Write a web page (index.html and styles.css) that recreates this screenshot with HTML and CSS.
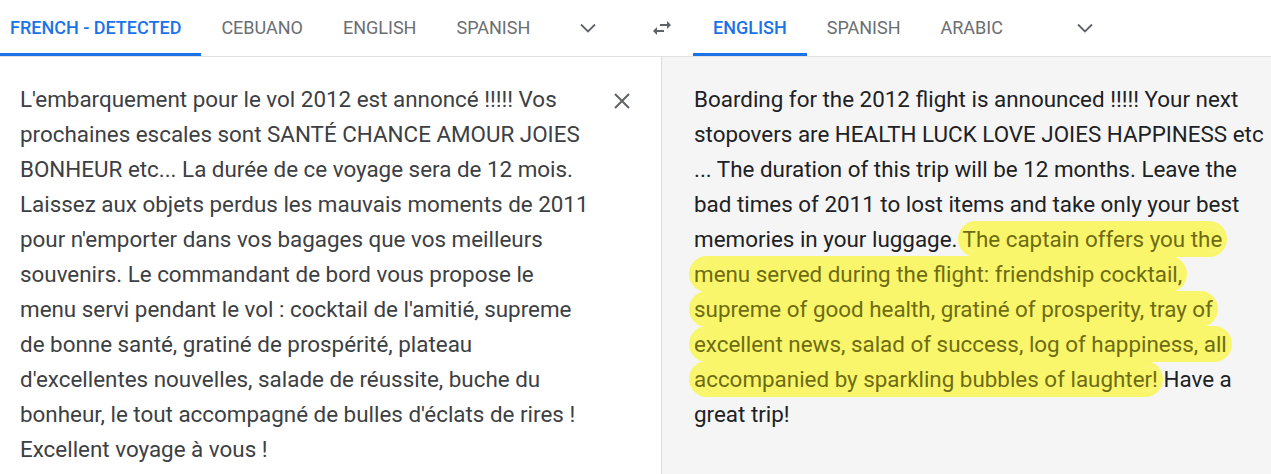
FILE: index.html
```html
<!DOCTYPE html>
<html lang="fr">
<head>
  <meta charset="UTF-8">
  <title>Translate</title>
  <link rel="stylesheet" href="styles.css">
</head>
<body>
  <div class="lang-header">
    <div class="lang-bar source-bar">
      <div class="tab active">French - detected</div>
      <div class="tab">Cebuano</div>
      <div class="tab">English</div>
      <div class="tab">Spanish</div>
      <div class="chevron">
        <svg width="24" height="24" viewBox="0 0 24 24"><path d="M5 8.5l7 7 7-7" fill="none" stroke="#5f6368" stroke-width="1.8"/></svg>
      </div>
    </div>
    <div class="swap">
      <svg width="24" height="24" viewBox="0 0 24 24"><path d="M6.99 11L3 15l3.99 4v-3H14v-2H6.99v-3zM21 9l-3.99-4v3H10v2h7.01v3L21 9z" fill="#5f6368"/></svg>
    </div>
    <div class="lang-bar target-bar">
      <div class="tab active">English</div>
      <div class="tab">Spanish</div>
      <div class="tab">Arabic</div>
      <div class="chevron target-chevron">
        <svg width="24" height="24" viewBox="0 0 24 24"><path d="M5 8.5l7 7 7-7" fill="none" stroke="#5f6368" stroke-width="1.8"/></svg>
      </div>
    </div>
  </div>

  <div class="panels">
    <div class="panel source">
      <div class="source-text">L'embarquement pour le vol 2012 est annoncé !!!!! Vos prochaines escales sont SANTÉ CHANCE AMOUR JOIES BONHEUR etc... La durée de ce voyage sera de 12 mois. Laissez aux objets perdus les mauvais moments de 2011 pour n'emporter dans vos bagages que vos meilleurs souvenirs. Le commandant de bord vous propose le menu servi pendant le vol : cocktail de l'amitié, supreme de bonne santé, gratiné de prospérité, plateau d'excellentes nouvelles, salade de réussite, buche du bonheur, le tout accompagné de bulles d'éclats de rires ! Excellent voyage à vous !</div>
      <div class="clear-btn">
        <svg width="24" height="24" viewBox="0 0 24 24"><path d="M5 5l14 14M19 5L5 19" fill="none" stroke="#5f6368" stroke-width="2"/></svg>
      </div>
    </div>
    <div class="panel target">
      <div class="target-text" lang="en">Boarding for the 2012 flight is announced !!!!! Your next stopovers are HEALTH LUCK LOVE JOIES HAPPINESS etc ... The duration of this trip will be 12 months. Leave the bad times of 2011 to lost items and take only your best memories in your luggage. <span class="marked">The captain offers you the menu served during the flight: friendship cocktail, supreme of good health, gratiné of prosperity, tray of excellent news, salad of success, log of happiness, all accompanied by sparkling bubbles of laughter!</span> Have a great trip!</div>
    </div>
  </div>
</body>
</html>
```

FILE: styles.css
```css
body {
  margin: 0;
  padding: 0;
  font-family: Roboto, "Noto Sans", sans-serif;
  background-color: #fff;
  overflow: hidden;
}

.lang-header {
  display: flex;
  height: 56px;
  border-bottom: 1px solid #e0e0e0;
}

.lang-bar {
  display: flex;
  align-items: stretch;
}

.source-bar {
  width: 642px;
}

.target-bar {
  padding-left: 11px;
}

.tab {
  display: flex;
  align-items: center;
  padding: 0 20px;
  font-size: 18px;
  font-weight: 400;
  text-transform: uppercase;
  color: #6b6e72;
  border-bottom: 3px solid transparent;
  padding-top: 1px;
}

.source-bar .tab:first-child {
  padding-left: 10px;
}

.tab.active {
  color: #1a73e8;
  border-bottom-color: #1a73e8;
  font-weight: 500;
}

.chevron {
  display: flex;
  align-items: center;
  margin-left: 26px;
}

.target-chevron {
  margin-left: 50px;
}

.swap {
  width: 40px;
  display: flex;
  align-items: center;
  justify-content: center;
}

.panels {
  display: flex;
  height: 417px;
}

.panel {
  font-size: 22.4px;
  line-height: 35px;
}

.source {
  width: 661px;
  display: flex;
  padding: 25px 0 0 20px;
  box-sizing: border-box;
  color: #3c4043;
}

.source-text {
  width: 572px;
}

.clear-btn {
  margin: 6px 0 0 18px;
}

.target {
  flex: 1;
  background-color: #f5f5f5;
  border-left: 1px solid #dadce0;
  padding: 25px 3px 0 32px;
  color: #202124;
}

.marked {
  background-color: #f9f66b;
  color: #6e6c12;
  border-radius: 14px;
  box-shadow: 0 0 0 5px #f9f66b;
  -webkit-box-decoration-break: clone;
  box-decoration-break: clone;
}
```
